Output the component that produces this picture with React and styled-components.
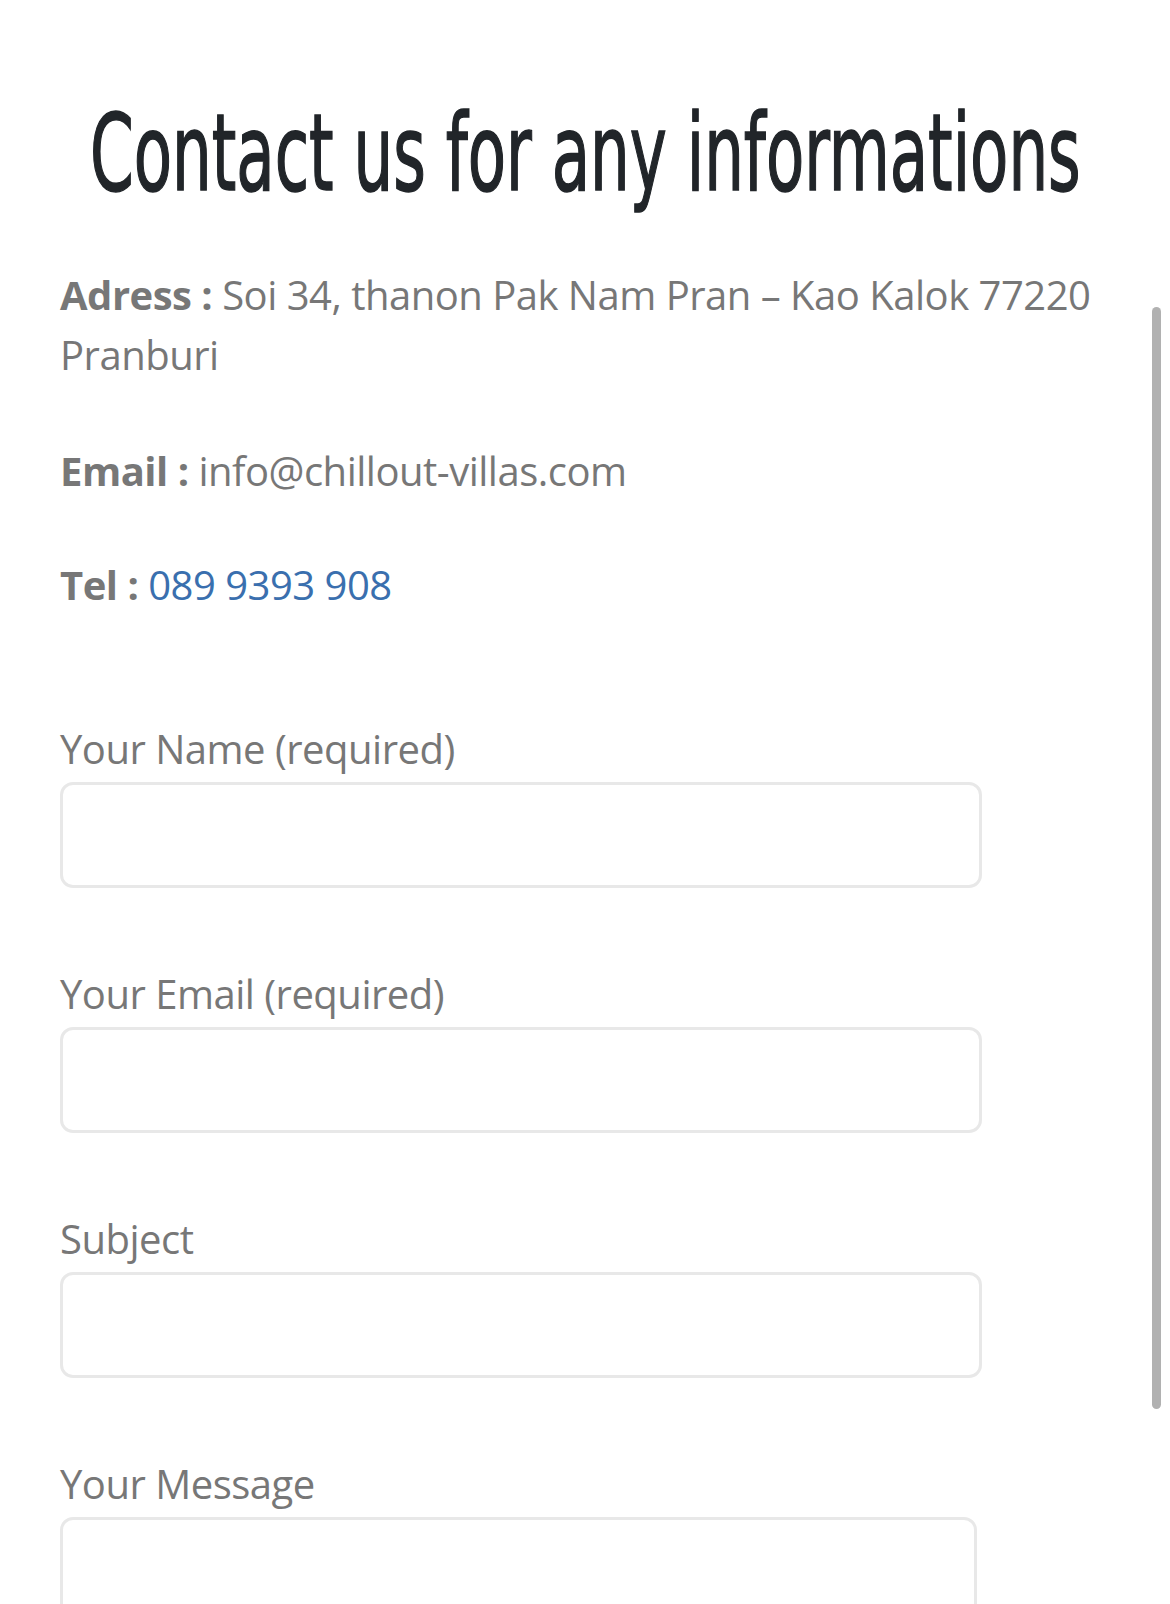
import React, { useLayoutEffect, useRef, useState } from "react"
import styled, { createGlobalStyle } from "styled-components"

const GlobalStyle = createGlobalStyle`
  html, body {
    margin: 0;
    padding: 0;
    background: #fff;
  }
  body {
    font-family: "Open Sans", "Liberation Sans", sans-serif;
    overflow: hidden;
  }
`

const Page = styled.main`
  box-sizing: border-box;
  width: 1170px;
  padding: 98px 60px 0;
`

// condensed display heading (squeezed to the reference's width)
const Title = styled.h1`
  display: flex;
  justify-content: center;
  margin: 0 0 57px;
  font-family: "DejaVu Sans Condensed", "DejaVu Sans", sans-serif;
  font-weight: 400;
  font-size: 107px;
  line-height: 110px;
  color: #212529;
  -webkit-text-stroke: 1.5px #212529;
  white-space: nowrap;
  span {
    display: inline-block;
    flex: none;
    transform-origin: center;
  }
`

const Info = styled.p`
  margin: 0 0 ${(p) => p.gap}px;
  font-size: 40px;
  letter-spacing: -0.5px;
  line-height: 60px;
  color: #777;
  b {
    font-weight: 700;
  }
  a {
    color: #3a6fae;
    text-decoration: none;
  }
`

const Form = styled.form`
  display: flex;
  flex-direction: column;
`

const Field = styled.label`
  display: flex;
  flex-direction: column;
  margin-bottom: 76px;
  font-size: 40px;
  letter-spacing: -0.5px;
  line-height: 60px;
  color: #777;
`

const Input = styled.input`
  box-sizing: border-box;
  width: 922px;
  height: 106px;
  margin-top: 3px;
  border: 3px solid #e8e8e8;
  border-radius: 13px;
  background: #fff;
  font: inherit;
  outline: none;
`

const TextArea = styled.textarea`
  box-sizing: border-box;
  width: 917px;
  height: 320px;
  margin-top: 3px;
  border: 3px solid #e8e8e8;
  border-radius: 13px;
  background: #fff;
  font: inherit;
  resize: none;
  outline: none;
`

const ScrollThumb = styled.div`
  position: fixed;
  top: 307px;
  right: 9px;
  width: 9px;
  height: 1102px;
  border-radius: 5px;
  background: #b1b1b1;
`

const TITLE_WIDTH = 991

const Heading = ({ children }) => {
  const ref = useRef(null)
  const [scale, setScale] = useState(1)
  useLayoutEffect(() => {
    if (ref.current) setScale(TITLE_WIDTH / ref.current.offsetWidth)
  }, [])
  return (
    <Title>
      <span ref={ref} style={{ transform: `scaleX(${scale})` }}>
        {children}
      </span>
    </Title>
  )
}

const App = () => (
  <>
    <GlobalStyle />
    <Page>
      <Heading>Contact us for any informations</Heading>
      <Info gap={56}>
        <b>Adress :</b> Soi 34, thanon Pak Nam Pran – Kao Kalok 77220 Pranburi
      </Info>
      <Info gap={54}>
        <b>Email :</b> info@chillout-villas.com
      </Info>
      <Info gap={104}>
        <b>Tel :</b> <a href="tel:0899393908">089 9393 908</a>
      </Info>
      <Form>
        <Field>
          Your Name (required)
          <Input type="text" />
        </Field>
        <Field>
          Your Email (required)
          <Input type="email" />
        </Field>
        <Field>
          Subject
          <Input type="text" />
        </Field>
        <Field>
          Your Message
          <TextArea />
        </Field>
      </Form>
    </Page>
    <ScrollThumb />
  </>
)

export default App
